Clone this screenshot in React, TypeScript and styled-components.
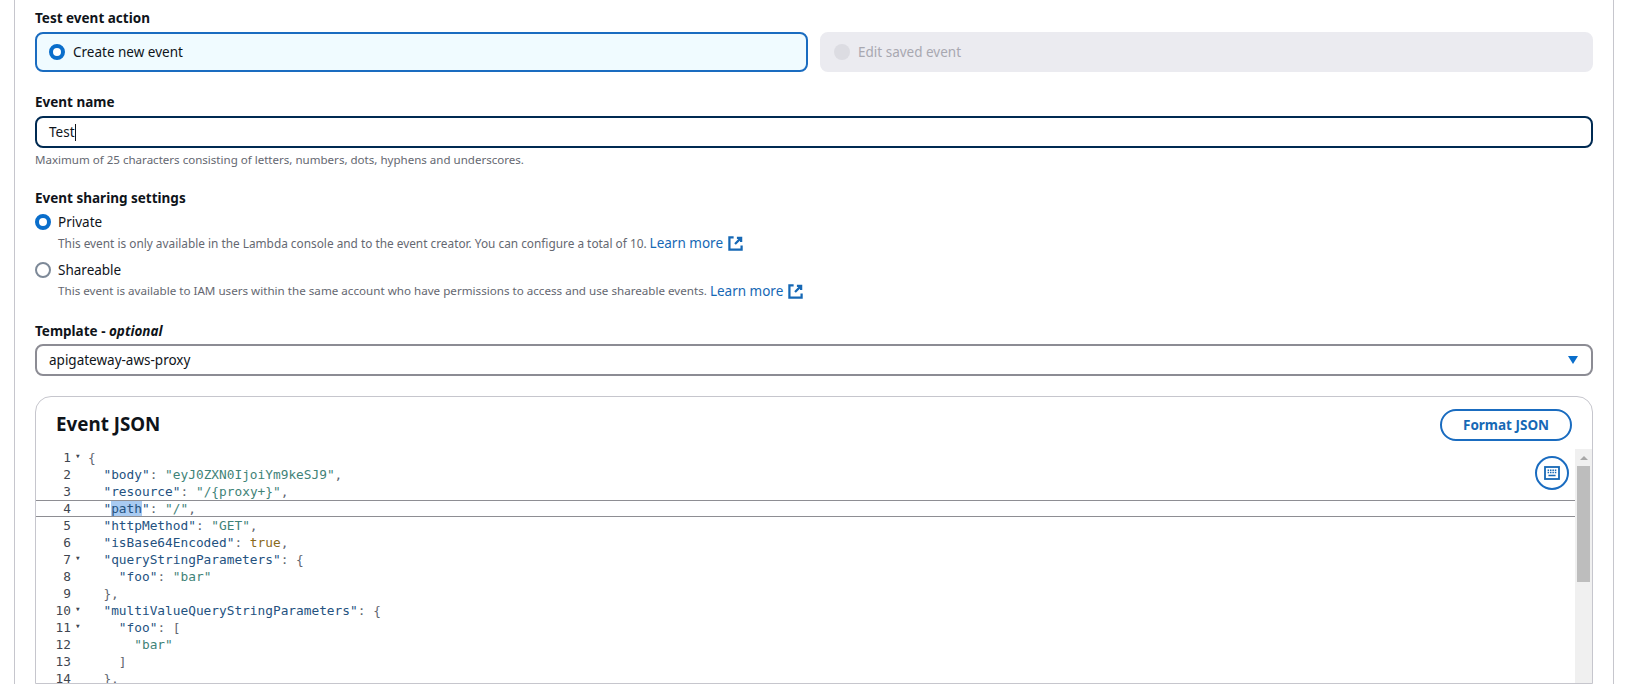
import React from "react";
import styled, { createGlobalStyle } from "styled-components";

const Global = createGlobalStyle`
  html, body { margin: 0; padding: 0; background: #fff; height: 684px; overflow: hidden; }
  #root { height: 684px; overflow: hidden; }
  * { box-sizing: border-box; }
`;

const Page = styled.div`
  height: 684px;
  padding: 0 21px 0 14px;
  overflow: hidden;
  font-family: "Noto Sans", "Open Sans", sans-serif;
  font-size: 14px;
  color: #0f141a;
`;

const Frame = styled.div`
  height: 684px;
  border-left: 1px solid #c6c6cd;
  border-right: 1px solid #c6c6cd;
  padding: 8px 20px 0 20px;
  display: flex;
  flex-direction: column;
`;

const Label = styled.div<{ $gap: number; $top?: number }>`
  font-size: 13.5px;
  font-weight: 700;
  line-height: 20px;
  height: 20px;
  margin-top: ${(p) => p.$top ?? 0}px;
  margin-bottom: ${(p) => p.$gap}px;
`;

const Tiles = styled.div`
  display: grid;
  grid-template-columns: 773px 773px;
  gap: 12px;
  height: 40px;
  margin-bottom: 20px;
`;

const Tile = styled.div<{ $on?: boolean }>`
  display: flex;
  align-items: center;
  gap: 8px;
  padding: 0 12px;
  border-radius: 8px;
  border: 2px solid ${(p) => (p.$on ? "#1a6cc0" : "#ebebf0")};
  background: ${(p) => (p.$on ? "#f0fbff" : "#ebebf0")};
  color: ${(p) => (p.$on ? "#0f141a" : "#a8a8b0")};
  font-size: 13.5px;
`;

const Radio = styled.span<{ $kind: "on" | "off" | "disabled" }>`
  flex: none;
  width: 16px;
  height: 16px;
  border-radius: 50%;
  background: ${(p) => (p.$kind === "disabled" ? "#dcdce2" : "#fff")};
  border: ${(p) =>
    p.$kind === "on" ? "4.5px solid #0a6ecb" : p.$kind === "off" ? "2px solid #7d8998" : "none"};
`;

const TextBox = styled.div<{ $focus?: boolean }>`
  height: 32px;
  display: flex;
  align-items: center;
  justify-content: space-between;
  padding: 0 12px;
  border-radius: 8px;
  border: 2px solid ${(p) => (p.$focus ? "#002a52" : "#8c8c94")};
  font-size: 13.5px;
`;

const Caret = styled.span`
  display: inline-block;
  width: 1px;
  height: 17px;
  background: #0f141a;
  vertical-align: -4px;
`;

const Hint = styled.div`
  font-size: 11.55px;
  line-height: 16px;
  color: #656871;
  margin-top: 4px;
  margin-bottom: 20px;
`;

const Option = styled.div`
  display: grid;
  grid-template-columns: 16px 1fr;
  column-gap: 7px;
  align-items: center;
  margin-bottom: 7px;
`;

const OptionTitle = styled.div`
  font-size: 13.5px;
  line-height: 20px;
`;

const OptionDesc = styled.div<{ $size: number }>`
  grid-column: 2;
  height: 20px;
  margin-top: 1px;
  font-size: ${(p) => p.$size}px;
  line-height: 20px;
  color: #656871;
  white-space: nowrap;
`;

const Link = styled.a`
  color: #1668b5;
  font-size: 13.5px;
  margin-left: 3px;
  display: inline-flex;
  align-items: center;
  gap: 5px;
  vertical-align: top;
`;

const Card = styled.section`
  flex: 1;
  margin-top: 20px;
  border: 1px solid #c6c6cd;
  border-radius: 16px 16px 0 0;
  overflow: hidden;
  display: flex;
  flex-direction: column;
  min-height: 0;
`;

const CardHead = styled.header`
  height: 52px;
  flex: none;
  display: flex;
  align-items: center;
  justify-content: space-between;
  padding: 2px 20px 0 20px;
`;

const CardTitle = styled.h2`
  margin: 0 0 1px;
  font-size: 18.8px;
  font-weight: 700;
  color: #0f141a;
`;

const PillButton = styled.button`
  width: 132px;
  height: 32px;
  margin-top: 2px;
  border-radius: 16px;
  border: 2px solid #1a6cc0;
  background: #fff;
  color: #1668b5;
  font: 700 13.5px "Noto Sans", sans-serif;
`;

const Editor = styled.div`
  flex: 1;
  display: flex;
  min-height: 0;
  position: relative;
`;

const Code = styled.div`
  flex: 1;
  min-width: 0;
  font-family: "DejaVu Sans Mono", "Liberation Mono", monospace;
  font-size: 12.8px;
  line-height: 17px;
`;

const Row = styled.div<{ $active?: boolean }>`
  display: flex;
  height: 17px;
  white-space: pre;
  box-shadow: ${(p) => (p.$active ? "inset 0 1px 0 #8e8e93, inset 0 -1px 0 #8e8e93" : "none")};
`;

const LineNo = styled.span`
  flex: none;
  width: 35px;
  text-align: right;
  color: #3f4650;
`;

const Fold = styled.span`
  flex: none;
  width: 17px;
  padding-left: 5px;
  font-size: 6px;
  line-height: 13px;
  color: #3f4650;
`;

const Punct = styled.span`
  color: #5f6670;
`;
const Key = styled.span`
  color: #24527f;
`;
const Str = styled.span`
  color: #3f8378;
`;
const Bool = styled.span`
  color: #8a6a1c;
`;
const Selected = styled.span`
  background: #a9cbf2;
`;

const KeyboardButton = styled.button`
  position: absolute;
  top: 7px;
  right: 23px;
  width: 34px;
  height: 34px;
  padding: 0;
  border-radius: 50%;
  border: 2px solid #1a6cc0;
  background: #fff;
  display: flex;
  align-items: center;
  justify-content: center;
`;

const Scrollbar = styled.div`
  flex: none;
  width: 17px;
  background: #f0f0f0;
  display: flex;
  flex-direction: column;
  align-items: center;
`;

const ArrowUp = styled.div`
  height: 17px;
  width: 100%;
  display: flex;
  align-items: center;
  justify-content: center;
  &::before {
    content: "";
    border-left: 4px solid transparent;
    border-right: 4px solid transparent;
    border-bottom: 4px solid #a8a8a8;
  }
`;

const Thumb = styled.div`
  width: 13px;
  height: 116px;
  background: #bdbdbd;
`;

const External = () => (
  <svg width="15" height="15" viewBox="0 0 16 16" fill="none" stroke="#1668b5" strokeWidth="2.4">
    <path d="M6 1.5H1.5v13h13V10" />
    <path d="M9.5 2h4.5V6.5M14 2 7.5 8.5" />
  </svg>
);

const KeyboardIcon = () => (
  <svg width="16" height="14" viewBox="0 0 16 14" fill="none">
    <rect x="1" y="1" width="14" height="12" stroke="#1668b5" strokeWidth="1.8" />
    <path
      d="M3.6 3.4h1.5v1.5H3.6zM6 3.4h1.5v1.5H6zM8.4 3.4h1.5v1.5H8.4zM10.8 3.4h1.5v1.5h-1.5zM3.6 5.8h1.5v1.5H3.6zM6 5.8h1.5v1.5H6zM8.4 5.8h1.5v1.5H8.4zM10.8 5.8h1.5v1.5h-1.5zM4.4 8.8h7.2v1.5H4.4z"
      fill="#1668b5"
    />
  </svg>
);

const P = ({ children }: { children: React.ReactNode }) => <Punct>{children}</Punct>;

type Line = { fold?: boolean; active?: boolean; body: React.ReactNode };

const kv = (indent: string, k: string, v: React.ReactNode, tail = ",") => (
  <>
    {indent}
    <Key>"{k}"</Key>
    <P>: </P>
    {v}
    <P>{tail}</P>
  </>
);

const lines: Line[] = [
  { fold: true, body: <P>{"{"}</P> },
  { body: kv("  ", "body", <Str>"eyJ0ZXN0IjoiYm9keSJ9"</Str>) },
  { body: kv("  ", "resource", <Str>"/{"{"}proxy+{"}"}"</Str>) },
  {
    active: true,
    body: (
      <>
        {"  "}
        <Key>
          "<Selected>path</Selected>"
        </Key>
        <P>: </P>
        <Str>"/"</Str>
        <P>,</P>
      </>
    ),
  },
  { body: kv("  ", "httpMethod", <Str>"GET"</Str>) },
  { body: kv("  ", "isBase64Encoded", <Bool>true</Bool>) },
  { fold: true, body: kv("  ", "queryStringParameters", <P>{"{"}</P>, "") },
  { body: kv("    ", "foo", <Str>"bar"</Str>, "") },
  { body: <P>{"  },"}</P> },
  { fold: true, body: kv("  ", "multiValueQueryStringParameters", <P>{"{"}</P>, "") },
  { fold: true, body: kv("    ", "foo", <P>[</P>, "") },
  { body: <>{"      "}<Str>"bar"</Str></> },
  { body: <P>{"    ]"}</P> },
  { body: <P>{"  },"}</P> },
];

export default function App() {
  return (
    <Page>
      <Global />
      <Frame>
        <Label $gap={4}>Test event action</Label>
        <Tiles>
          <Tile $on>
            <Radio $kind="on" />
            Create new event
          </Tile>
          <Tile>
            <Radio $kind="disabled" />
            Edit saved event
          </Tile>
        </Tiles>

        <Label $gap={4}>Event name</Label>
        <TextBox $focus>
          <span>
            Test
            <Caret />
          </span>
        </TextBox>
        <Hint>Maximum of 25 characters consisting of letters, numbers, dots, hyphens and underscores.</Hint>

        <Label $gap={4}>Event sharing settings</Label>
        <Option>
          <Radio $kind="on" />
          <OptionTitle>Private</OptionTitle>
          <OptionDesc $size={11.83}>
            This event is only available in the Lambda console and to the event creator. You can configure a total of 10.
            <Link>
              Learn more <External />
            </Link>
          </OptionDesc>
        </Option>
        <Option>
          <Radio $kind="off" />
          <OptionTitle>Shareable</OptionTitle>
          <OptionDesc $size={11.63}>
            This event is available to IAM users within the same account who have permissions to access and use shareable events.
            <Link>
              Learn more <External />
            </Link>
          </OptionDesc>
        </Option>

        <Label $gap={3} $top={13}>
          Template - <em>optional</em>
        </Label>
        <TextBox>
          <span>apigateway-aws-proxy</span>
          <svg width="12" height="10" viewBox="0 0 12 10">
            <path d="M1 1h10L6 9z" fill="#0a6ecb" />
          </svg>
        </TextBox>

        <Card>
          <CardHead>
            <CardTitle>Event JSON</CardTitle>
            <PillButton>Format JSON</PillButton>
          </CardHead>
          <Editor>
            <Code>
              {lines.map((l, i) => (
                <Row key={i} $active={l.active}>
                  <LineNo>{i + 1}</LineNo>
                  <Fold>{l.fold ? "▼" : ""}</Fold>
                  <span>{l.body}</span>
                </Row>
              ))}
            </Code>
            <KeyboardButton aria-label="Keyboard">
              <KeyboardIcon />
            </KeyboardButton>
            <Scrollbar>
              <ArrowUp />
              <Thumb />
            </Scrollbar>
          </Editor>
        </Card>
      </Frame>
    </Page>
  );
}
